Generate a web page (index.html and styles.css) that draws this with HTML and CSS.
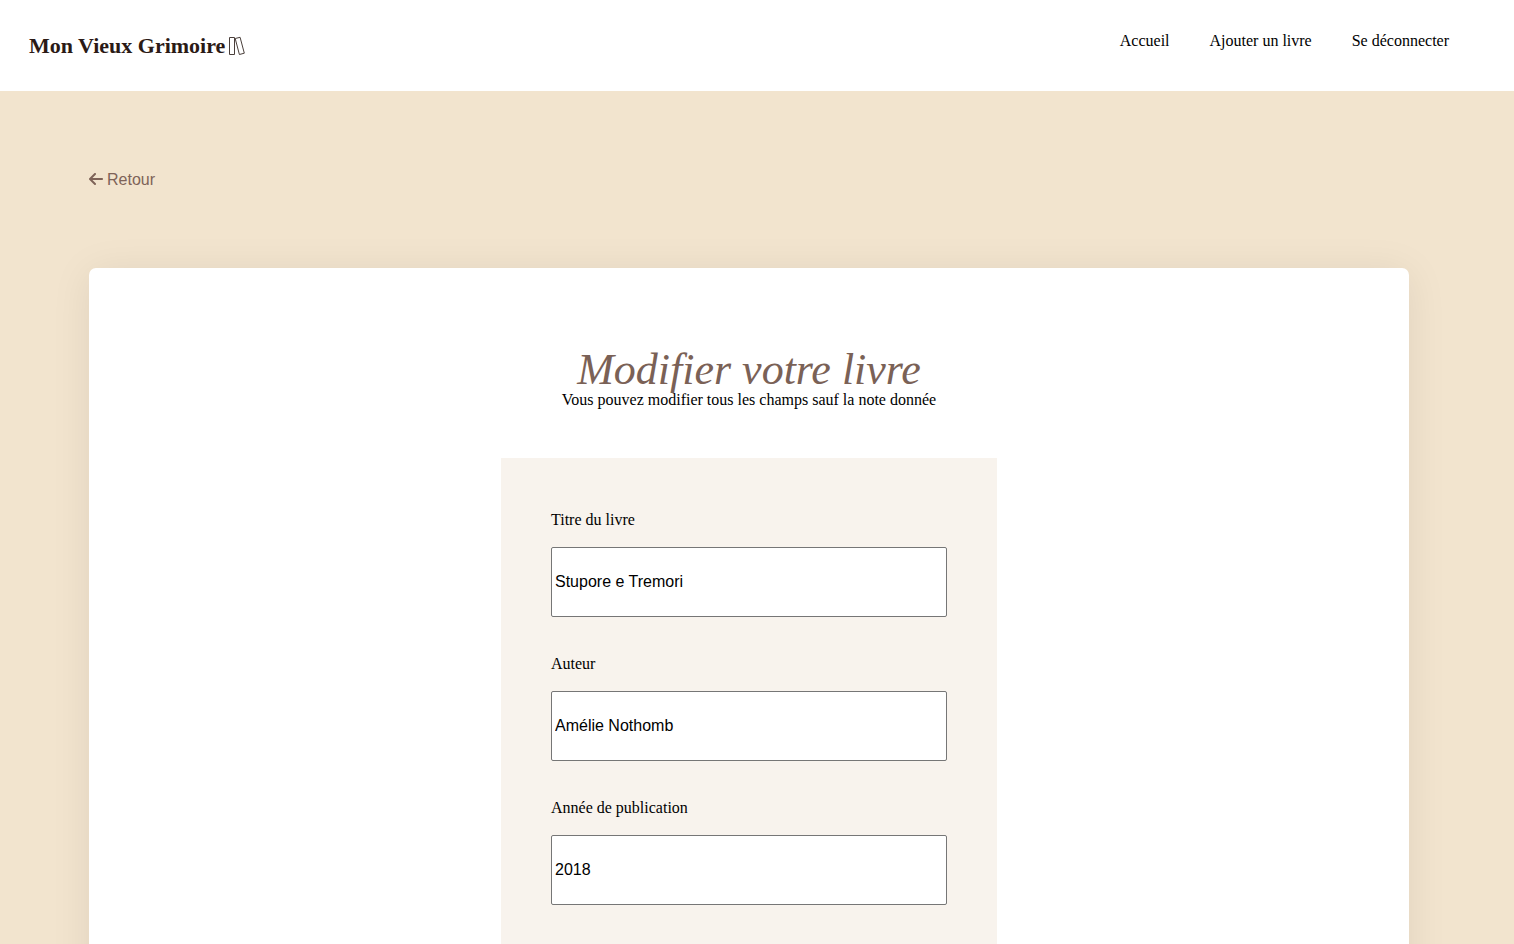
FILE: index.html
```
<!DOCTYPE html>
<html lang="fr">
<head>
<meta charset="utf-8">
<meta name="viewport" content="width=device-width, initial-scale=1">
<title>Mon Vieux Grimoire</title>
<link rel="stylesheet" href="styles.css">
</head>
<body>
<header class="header">
  <a class="logo" href="#">
    <span class="logo-name">Mon Vieux Grimoire</span>
    <svg class="logo-books" width="18" height="20" viewBox="0 0 18 20" fill="none" stroke="#4a3f3b" aria-hidden="true">
      <path d="M1.500 1.500h5v17h-5zM7.200 2.500l4.900-1.200 4.200 15.900-4.900 1.300z"/>
    </svg>
  </a>
  <nav class="nav">
    <a href="#">Accueil</a>
    <a href="#">Ajouter un livre</a>
    <a href="#">Se déconnecter</a>
  </nav>
</header>
<main class="page">
  <a class="back" href="#">
    <svg class="back-icon" width="14" height="16" viewBox="0 0 448 512" fill="currentColor" aria-hidden="true">
      <path d="M9.400 233.400c-12.500 12.500-12.500 32.800 0 45.300l160 160c12.500 12.500 32.800 12.500 45.300 0s12.500-32.800 0-45.300L109.200 288 416 288c17.700 0 32-14.300 32-32s-14.300-32-32-32l-306.700 0L214.600 118.600c12.500-12.500 12.500-32.800 0-45.300s-32.800-12.500-45.300 0l-160 160z"/>
    </svg>
    <span>Retour</span>
  </a>
  <section class="card">
    <h1 class="title">Modifier votre livre</h1>
    <p class="subtitle">Vous pouvez modifier tous les champs sauf la note donnée</p>
    <form class="form">
      <label class="field"><span>Titre du livre</span><input type="text" value="Stupore e Tremori"></label>
      <label class="field"><span>Auteur</span><input type="text" value="Amélie Nothomb"></label>
      <label class="field"><span>Année de publication</span><input type="text" value="2018"></label>
    </form>
  </section>
</main>
</body>
</html>
```
FILE: styles.css
```
* {
  box-sizing: border-box;
}

body {
  margin: 0;
  background: #f2e4ce;
  color: #000;
  font: 16px/18px "Liberation Serif", "Times New Roman", serif;
}

a {
  color: inherit;
  text-decoration: none;
}

.header {
  display: flex;
  justify-content: space-between;
  align-items: flex-start;
  padding: 32px 65px 32px 29px;
  background: #fff;
}

.logo {
  display: flex;
  align-items: center;
  gap: 3px;
  color: #2b1a16;
}

.logo-name {
  font-size: 22px;
  font-weight: 700;
  line-height: 27px;
}

.nav {
  display: flex;
  gap: 40px;
}

.page {
  padding: 80px 105px 80px 89px;
}

.back {
  display: flex;
  align-items: flex-start;
  gap: 4px;
  width: fit-content;
  color: #7e6358;
  font-family: "Liberation Sans", Arial, sans-serif;
}

.card {
  display: flex;
  flex-direction: column;
  align-items: center;
  margin-top: 79px;
  padding: 81px 20px;
  border-radius: 7px;
  background: #fff;
  box-shadow: 0 4px 40px rgba(0, 0, 0, 0.08);
}

.title {
  margin: 0;
  color: #7a6156;
  font-size: 44px;
  font-style: italic;
  font-weight: 400;
  line-height: 42px;
}

.subtitle {
  margin: 0;
}

.form {
  display: flex;
  flex-direction: column;
  gap: 38px;
  width: 100%;
  max-width: 496px;
  margin-top: 49px;
  padding: 53px 50px;
  background: #f8f3ed;
}

.field {
  display: flex;
  flex-direction: column;
  gap: 18px;
}

.field input {
  width: 100%;
  height: 70px;
  padding: 1px 3px;
  border: 1px solid #767676;
  border-radius: 2px;
  background: #fff;
  color: #000;
  font: 16px "Liberation Sans", Arial, sans-serif;
}
```
